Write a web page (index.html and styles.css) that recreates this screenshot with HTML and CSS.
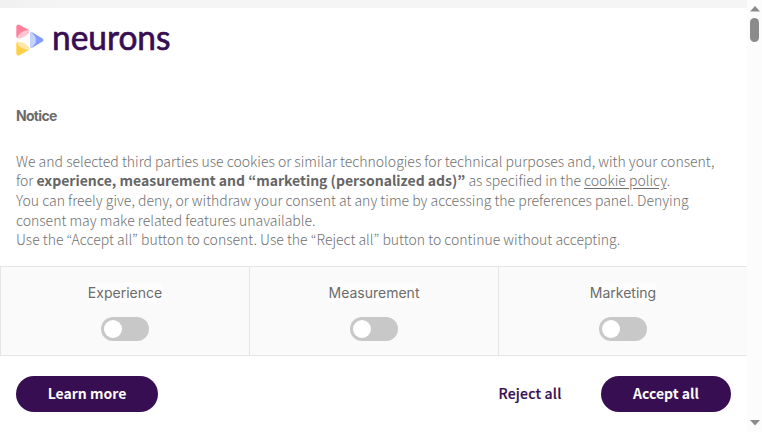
FILE: index.html
```
<!DOCTYPE html>
<html lang="en">
<head>
<meta charset="utf-8">
<title>Notice</title>
<link rel="stylesheet" href="styles.css">
</head>
<body>
<div class="page">
  <main class="dialog">
    <header class="brand">
      <svg class="logo" width="156" height="36" viewBox="0 0 156 36" role="img" aria-label="neurons">
        <path fill="#ff7f9c" d="M.3 3Q.5-.8 3.800 1L12.500 5.800Q14 7 12.500 8L3.500 13.500Q.5 15 .3 12Z"/>
        <path fill="#ffc5d3" d="M1 14.500Q2.500 7.500 12 6Q14.200 6.500 13.200 8.500Q9 14.500 1 14.500Z"/>
        <path fill="#819cfc" d="M14 10Q14.500 7.500 17 8.800L26.500 14.400Q28.500 16 26.500 17.600L17 23.200Q14.500 24.500 14 22Z"/>
        <path fill="#c8d3fd" d="M15.500 8.500Q24.500 16 15.500 23.500Q14 23.300 14 21V11Q14 8.700 15.500 8.500Z"/>
        <path fill="#ffcf45" d="M.3 29Q.5 32.800 3.800 31L12.500 26.200Q14 25 12.500 24L3.500 18.500Q.5 17 .3 20Z"/>
        <path fill="#ffe8ab" d="M1 17.500Q2.500 24.500 12 26Q14.200 25.500 13.200 23.500Q9 17.500 1 17.500Z"/>
        <text class="wordmark" x="36" y="26" textLength="118.500" lengthAdjust="spacingAndGlyphs">neurons</text>
      </svg>
    </header>
    <h1 class="title">Notice</h1>
    <div class="copy">
      <div>We and selected third parties use cookies or similar technologies for technical purposes and, with your consent,</div>
      <div>for <b>experience, measurement and “marketing (personalized ads)”</b> as specified in the <a class="policy">cookie policy</a>.</div>
      <div>You can freely give, deny, or withdraw your consent at any time by accessing the preferences panel. Denying</div>
      <div>consent may make related features unavailable.</div>
      <div>Use the “Accept all” button to consent. Use the “Reject all” button to continue without accepting.</div>
    </div>
    <section class="purposes">
      <div class="purpose"><span class="label">Experience</span><span class="toggle"></span></div>
      <div class="purpose"><span class="label">Measurement</span><span class="toggle"></span></div>
      <div class="purpose"><span class="label">Marketing</span><span class="toggle"></span></div>
    </section>
    <footer class="actions">
      <button class="btn learn">Learn more</button>
      <button class="btn reject">Reject all</button>
      <button class="btn accept">Accept all</button>
    </footer>
  </main>
  <aside class="scrollbar">
    <svg width="10" height="6" viewBox="0 0 10 6"><path fill="#8b8b8b" d="M5 0l5 5.500H0z"/></svg>
    <span class="thumb"></span>
    <svg class="down" width="10" height="6" viewBox="0 0 10 6"><path fill="#8b8b8b" d="M0 0h10L5 5.500z"/></svg>
  </aside>
</div>
</body>
</html>
```
FILE: styles.css
```
* { box-sizing: border-box; }
body { margin: 0; background: #fff; color: #6b6b6b; overflow: hidden; }
.page { display: flex; width: 762px; height: 432px; background: linear-gradient(90deg, #f0f0f0, #f5f5f5 60px) left top / 747px 8px no-repeat; }
.dialog { width: 747px; margin-top: 8px; }
.brand { height: 92px; padding: 16px 0 0 16px; }
.logo { display: block; overflow: visible; }
.wordmark { font: 400 35.500px Lato, sans-serif; fill: #380e52; stroke: #380e52; stroke-width: .7px; }
.title { margin: 0; padding-left: 16px; height: 52px; font: 700 14px/17px Inter, sans-serif; letter-spacing: -.7px; padding-top: 7px; }
.copy { height: 114px; padding-left: 16px; font: 300 14px/19.6px "Noto Sans CJK KR", sans-serif; white-space: nowrap; color: #707070; }
.copy b { font-weight: 700; color: #666; letter-spacing: -.01px; }
.copy div:nth-child(2) { margin-top: -.4px; margin-bottom: .4px; }
.policy { text-decoration: underline; text-underline-offset: 2px; }
.purposes { display: grid; grid-template-columns: 249px 249px 249px; height: 90px; border: solid #e5e5e5; border-width: 1px 0; background: #fafafa; }
.purpose { display: flex; flex-direction: column; align-items: center; padding-top: 16px; border-left: 1px solid #e5e5e5; }
.label { font: 400 14px/19px Inter, sans-serif; height: 19px; background: #fdfdfd; color: #6b6b6b; }
.toggle { width: 48px; height: 24px; margin-top: 15px; padding: 3px; border-radius: 12px; background: #c8c8c8; }
.toggle::before { content: ""; display: block; width: 18px; height: 18px; border-radius: 50%; background: #fff; }
.actions { display: flex; padding: 20px 16px 0; }
.btn { height: 36px; padding: 0 0 2px; border: 0; border-radius: 18px; background: #380e52; color: #fafafa; font: 700 14px/34px "Noto Sans CJK KR", sans-serif; white-space: nowrap; }
.learn { width: 142px; margin-right: auto; }
.reject { width: 130px; background: #fff; color: #380e52; margin-right: 6px; font-weight: 500; letter-spacing: .2px; -webkit-text-stroke: .2px #380e52; }
.accept { width: 130px; }
.scrollbar { display: flex; flex-direction: column; align-items: center; width: 15px; background: #fcfcfc; padding: 6px 0; }
.thumb { width: 9px; height: 24px; margin-top: 6px; border-radius: 5px; background: #8b8b8b; }
.down { margin-top: auto; }
```
